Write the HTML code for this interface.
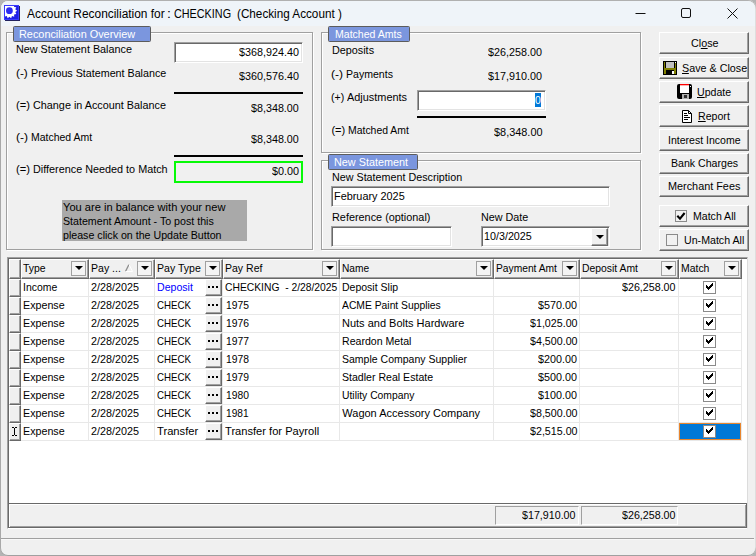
<!DOCTYPE html>
<html><head><meta charset="utf-8"><title>Account Reconciliation</title>
<style>
html,body{margin:0;padding:0;}
body{width:756px;height:556px;overflow:hidden;background:#b4b4b4;font-family:"Liberation Sans",sans-serif;font-size:11px;color:#000;position:relative;}
#win{position:absolute;left:0;top:0;width:756px;height:556px;border-radius:8px;background:#f0f0f0;overflow:hidden;box-shadow:inset 1px 0 0 #a8a8a8, inset 0 1px 0 #b0b0b0, inset 0 -1px 0 #a0a0a0, inset -1px 0 0 #dedede;}
#win div,#win svg,#win span{position:absolute;box-sizing:border-box;white-space:nowrap;}
#tb{left:1px;top:1px;width:754px;height:25px;background:#eff4f9;border-radius:7px 7px 0 0;}
.t{line-height:13px;height:13px;transform-origin:0 0;}
.tt{line-height:16px;height:16px;transform-origin:0 0;}
.grp{border:1px solid #a0a0a0;box-shadow:inset 1px 1px 0 #fff, 1px 1px 0 #fff;}
.lbl{background:#7b96de;border:1px solid #5c5c5c;height:16px;border-radius:1.5px;}
.inp{background:#fff;border:1px solid #a0a0a0;border-right-color:#fff;border-bottom-color:#fff;box-shadow:inset 1px 1px 0 #696969, inset -1px -1px 0 #e3e3e3;}
.hl{background:#000;height:2px;}
.btn{background:#f0f0f0;border:1px solid #fff;border-right-color:#696969;border-bottom-color:#696969;box-shadow:inset -1px -1px 0 #a0a0a0;height:22px;left:659px;width:90px;}
u{text-decoration:none;position:relative;}
u:after{content:"";position:absolute;left:0;right:0;bottom:0;height:1px;background:#000;}
.hc{top:259px;height:20px;background:#f0f0f0;border-top:1px solid #fff;border-left:1px solid #fff;border-right:1px solid #696969;border-bottom:1px solid #696969;box-shadow:inset -1px -1px 0 #a0a0a0;}
.fb{top:261px;width:15px;height:15px;border:1px solid #a0a0a0;background:#f4f4f4;}
.ar{width:0;height:0;border:4px solid transparent;border-top:4px solid #000;border-bottom:none;}
.vl{top:279px;width:1px;height:162px;background:#e8e8e8;}
.hln{left:21px;width:721px;height:1px;background:#e8e8e8;}
.ind{left:9px;width:12px;height:18px;background:#f0f0f0;border-left:1px solid #fff;border-top:1px solid #fff;border-right:1px solid #696969;border-bottom:1px solid #696969;box-shadow:inset -1px -1px 0 #a0a0a0;}
.eb{left:205px;width:17px;height:17px;background:#f0f0f0;border:1px solid #fff;border-right-color:#696969;border-bottom-color:#696969;box-shadow:inset -1px -1px 0 #a0a0a0;}
.eb i{position:absolute;top:6px;width:2px;height:2px;background:#000;}
.cb2{width:12px;height:12px;background:#f1f1f1;border:1px solid #8a8a8a;}
.cb{width:13px;height:13px;background:#fff;border:1px solid #8a8a8a;}
</style></head><body>
<div id="win">
<div id="tb"></div>
<svg style="left:4px;top:5px" width="16" height="16" viewBox="0 0 16 16"><rect x="1" y="1" width="15" height="15" fill="#22225e"/><rect x="0" y="0" width="15" height="15" fill="#1f1fe6"/><rect x=".5" y=".5" width="14" height="14" fill="none" stroke="#3a3aff" stroke-width="1"/><svg x="1" y="1" width="13" height="13" viewBox="1 1 13 13"><path d="M13.10 5.70L11.25 7.04L12.34 9.04L10.09 9.44L10.20 11.72L8.00 11.11L7.11 13.21L5.40 11.70L3.69 13.21L2.80 11.11L0.60 11.72L0.71 9.44L-1.54 9.04L-0.45 7.04L-2.30 5.70L-0.45 4.36L-1.54 2.36L0.71 1.96L0.60 -0.32L2.80 0.29L3.69 -1.81L5.40 -0.30L7.11 -1.81L8.00 0.29L10.20 -0.32L10.09 1.96L12.34 2.36L11.25 4.36z" fill="#fff"/></svg><circle cx="5.4" cy="5.7" r="3.4" fill="#2b2bf2"/></svg>
<div class="tt" style="left:26.70px;top:6px;transform:scaleX(0.9925);font-size:12px;">Account Reconciliation for</div>
<div class="tt" style="left:167.38px;top:6px;transform:scaleX(1.1667);font-size:12px;">:</div>
<div class="tt" style="left:173.76px;top:6px;transform:scaleX(0.9005);font-size:12px;">CHECKING</div>
<div class="tt" style="left:237.42px;top:6px;transform:scaleX(0.9761);font-size:12px;">(Checking Account )</div>
<svg style="left:630px;top:0" width="126" height="26" viewBox="0 0 126 26"><g stroke="#111" stroke-width="1" fill="none"><path d="M5.5 13.5h10"/><rect x="51.5" y="8.5" width="9" height="9" rx="1.5"/><path d="M97.5 8.5l10 10M107.5 8.5l-10 10"/></g></svg>
<div class="grp" style="left:6px;top:32px;width:307px;height:218px;"></div>
<div class="lbl" style="left:13px;top:26px;width:138px;"></div>
<div class="t" style="left:19.31px;top:27.5px;transform:scaleX(0.9885);color:#fff;">Reconciliation Overview</div>
<div class="t" style="left:16.22px;top:43px;transform:scaleX(0.9825);">New Statement Balance</div>
<div class="t" style="left:16.20px;top:67px;transform:scaleX(1.0748);">(-)</div>
<div class="t" style="left:31.02px;top:67px;transform:scaleX(0.9743);">Previous Statement Balance</div>
<div class="t" style="left:16.24px;top:99px;transform:scaleX(1.0131);">(=)</div>
<div class="t" style="left:32.76px;top:99px;transform:scaleX(0.9834);">Change in Account Balance</div>
<div class="t" style="left:16.19px;top:131px;transform:scaleX(1.0955);">(-)</div>
<div class="t" style="left:31.44px;top:131px;transform:scaleX(0.9507);">Matched Amt</div>
<div class="t" style="left:16.24px;top:163px;transform:scaleX(1.0131);">(=)</div>
<div class="t" style="left:33.01px;top:163px;transform:scaleX(0.9845);">Difference Needed to Match</div>
<div class="inp" style="left:174px;top:42px;width:129px;height:21px;"></div>
<div class="t" style="left:239.10px;top:46px;transform:scaleX(0.9793);">$368,924.40</div>
<div class="t" style="left:239.10px;top:70px;transform:scaleX(0.9793);">$360,576.40</div>
<div class="hl" style="left:174px;top:92px;width:129px;"></div>
<div class="t" style="left:251.10px;top:102px;transform:scaleX(0.9769);">$8,348.00</div>
<div class="t" style="left:251.10px;top:133px;transform:scaleX(0.9769);">$8,348.00</div>
<div class="hl" style="left:174px;top:155px;width:129px;"></div>
<div style="left:174px;top:161px;width:129px;height:22px;border:2px solid #06fa06;"></div>
<div class="t" style="left:271.70px;top:165px;transform:scaleX(0.9849);">$0.00</div>
<div style="left:62px;top:200px;width:185px;height:41px;background:#a9a9a9;"></div>
<div class="t" style="left:62.80px;top:201px;transform:scaleX(1.0088);">You are in balance with your new</div>
<div class="t" style="left:62.56px;top:215px;transform:scaleX(0.9684);">Statement Amount - To post this</div>
<div class="t" style="left:62.92px;top:229px;transform:scaleX(0.9673);">please click on the Update Button</div>
<div class="grp" style="left:321px;top:32px;width:320px;height:121px;"></div>
<div class="lbl" style="left:328px;top:26px;width:82px;"></div>
<div class="t" style="left:334.74px;top:27.5px;transform:scaleX(0.9572);color:#fff;">Matched Amts</div>
<div class="t" style="left:332.02px;top:44px;transform:scaleX(0.9820);">Deposits</div>
<div class="t" style="left:331.39px;top:68px;transform:scaleX(1.0955);">(-)</div>
<div class="t" style="left:346.24px;top:68px;transform:scaleX(0.9589);">Payments</div>
<div class="t" style="left:331.48px;top:91px;transform:scaleX(0.9568);">(+)</div>
<div class="t" style="left:347.00px;top:91px;transform:scaleX(0.9921);">Adjustments</div>
<div class="t" style="left:331.45px;top:124px;">(=)</div>
<div class="t" style="left:348.45px;top:124px;transform:scaleX(0.9476);">Matched Amt</div>
<div class="t" style="left:488.20px;top:46px;transform:scaleX(0.9792);">$26,258.00</div>
<div class="t" style="left:488.20px;top:70px;transform:scaleX(0.9792);">$17,910.00</div>
<div class="inp" style="left:417px;top:90px;width:129px;height:21px;"></div>
<div style="left:535px;top:93px;width:6px;height:14px;background:#0078d7;"></div>
<div class="t" style="left:535.02px;top:93.5px;transform:scaleX(0.9434);color:#fff;">0</div>
<div class="hl" style="left:417px;top:116px;width:129px;"></div>
<div class="t" style="left:493.60px;top:126px;transform:scaleX(0.9914);">$8,348.00</div>
<div class="grp" style="left:321px;top:160px;width:320px;height:90px;"></div>
<div class="lbl" style="left:328px;top:154px;width:90px;"></div>
<div class="t" style="left:334.21px;top:155.5px;transform:scaleX(0.9846);color:#fff;">New Statement</div>
<div class="t" style="left:331.72px;top:171px;transform:scaleX(0.9764);">New Statement Description</div>
<div class="inp" style="left:331px;top:186px;width:279px;height:21px;"></div>
<div class="t" style="left:334.21px;top:190px;transform:scaleX(0.9882);">February 2025</div>
<div class="t" style="left:331.71px;top:211px;transform:scaleX(0.9877);">Reference (optional)</div>
<div class="t" style="left:481.42px;top:211px;transform:scaleX(0.9802);">New Date</div>
<div class="inp" style="left:331px;top:226px;width:121px;height:21px;"></div>
<div class="inp" style="left:481px;top:226px;width:129px;height:21px;"></div>
<div class="t" style="left:483.92px;top:229.5px;transform:scaleX(0.9766);">10/3/2025</div>
<div class="eb" style="left:591px;top:228px;width:17px;height:18px;"></div>
<div class="ar" style="left:596px;top:235px;"></div>
<div class="btn" style="top:32px;height:22px;"></div>
<div class="t" style="left:690.76px;top:37px;transform:scaleX(0.9777);">Cl<u>o</u>se</div>
<div class="btn" style="top:57px;height:22px;"></div>
<div class="t" style="left:682.06px;top:62px;transform:scaleX(0.9768);"><u>S</u>ave &amp; Close</div>
<div class="btn" style="top:81px;height:22px;"></div>
<div class="t" style="left:697.13px;top:86px;transform:scaleX(0.9619);"><u>U</u>pdate</div>
<div class="btn" style="top:105px;height:22px;"></div>
<div class="t" style="left:698.03px;top:110px;transform:scaleX(0.9638);"><u>R</u>eport</div>
<div class="btn" style="top:129px;height:22px;"></div>
<div class="t" style="left:668.14px;top:134px;transform:scaleX(0.9577);">Interest Income</div>
<div class="btn" style="top:153px;height:21px;"></div>
<div class="t" style="left:670.73px;top:157px;transform:scaleX(0.9627);">Bank Charges</div>
<div class="btn" style="top:176px;height:21px;"></div>
<div class="t" style="left:668.01px;top:180px;transform:scaleX(0.9859);">Merchant Fees</div>
<div class="btn" style="top:205px;height:22px;"><div class="cb2" style="left:15px;top:4px;"><svg style="left:0;top:0" width="10" height="10" viewBox="0 0 10 10"><path d="M1.3 4.7L4 7.6L8.6 2" stroke="#000" stroke-width="2.1" fill="none"/></svg></div></div>
<div class="t" style="left:693.04px;top:210px;transform:scaleX(0.9601);">Match All</div>
<div class="btn" style="top:229px;height:22px;"><div class="cb2" style="left:6px;top:4px;"></div></div>
<div class="t" style="left:684.03px;top:234px;transform:scaleX(0.9664);">Un-Match All</div>
<svg style="left:663px;top:61px" width="14" height="14" viewBox="0 0 14 14"><rect x="0" y="0" width="14" height="14" fill="#000"/><rect x="1" y="1" width="12" height="12" fill="#808000"/><rect x="3" y="1" width="8" height="6" fill="#c0c0c0"/><rect x="2" y="1" width="1" height="6" fill="#000"/><rect x="11" y="1" width="1" height="6" fill="#000"/><rect x="3" y="7" width="8" height="1" fill="#000" opacity="0"/><rect x="3" y="9" width="8" height="4" fill="#000"/><rect x="9" y="10" width="2" height="3" fill="#fff"/><rect x="12" y="1" width="1" height="1" fill="#fff"/></svg>
<svg style="left:677px;top:84px" width="15" height="15" viewBox="0 0 15 15"><rect x="0" y="0" width="15" height="15" rx="2" fill="#000"/><rect x="3" y="1" width="9" height="8" fill="#fff"/><rect x="3" y="0" width="9" height="1.3" fill="#ff0000"/><rect x="5" y="10" width="7" height="5" fill="#b0b0b0"/><rect x="7" y="11" width="3" height="3" fill="#303030"/><rect x="13" y="2" width="1" height="1" fill="#fff"/></svg>
<svg style="left:682px;top:110px" width="10" height="13" viewBox="0 0 10 13"><path d="M.5 .5h6l3 3v9h-9z" fill="#fff" stroke="#000"/><path d="M6.5 .5v3h3" fill="none" stroke="#000"/><path d="M2 3.5h3M2 5.5h4M2 7.5h6M2 9.5h4" stroke="#000" fill="none"/></svg>
<div style="left:7px;top:257px;width:741px;height:272px;background:#fff;border:1px solid #a0a0a0;border-right-color:#dcdcdc;border-bottom-color:#fff;box-shadow:inset 1px 1px 0 #696969;"></div>
<div class="hc" style="left:9px;width:12px;"></div>
<div class="hc" style="left:21px;width:68px;"></div>
<div class="fb" style="left:71px;"></div><div class="ar" style="left:75px;top:266px;"></div>
<div class="hc" style="left:89px;width:66px;"></div>
<div class="fb" style="left:137px;"></div><div class="ar" style="left:141px;top:266px;"></div>
<div class="hc" style="left:155px;width:68px;"></div>
<div class="fb" style="left:205px;"></div><div class="ar" style="left:209px;top:266px;"></div>
<div class="hc" style="left:223px;width:117px;"></div>
<div class="fb" style="left:322px;"></div><div class="ar" style="left:326px;top:266px;"></div>
<div class="hc" style="left:340px;width:154px;"></div>
<div class="fb" style="left:476px;"></div><div class="ar" style="left:480px;top:266px;"></div>
<div class="hc" style="left:494px;width:86px;"></div>
<div class="fb" style="left:562px;"></div><div class="ar" style="left:566px;top:266px;"></div>
<div class="hc" style="left:580px;width:99px;"></div>
<div class="fb" style="left:661px;"></div><div class="ar" style="left:665px;top:266px;"></div>
<div class="hc" style="left:679px;width:63px;"></div>
<div class="fb" style="left:724px;"></div><div class="ar" style="left:728px;top:266px;"></div>
<div class="t" style="left:23.11px;top:262px;transform:scaleX(0.9491);">Type</div>
<div class="t" style="left:91.04px;top:262px;transform:scaleX(0.9583);">Pay ...</div>
<div class="t" style="left:157.24px;top:262px;transform:scaleX(0.9598);">Pay Type</div>
<div class="t" style="left:225.04px;top:262px;transform:scaleX(0.9563);">Pay Ref</div>
<div class="t" style="left:342.07px;top:262px;transform:scaleX(0.9258);">Name</div>
<div class="t" style="left:496.06px;top:262px;transform:scaleX(0.9314);">Payment Amt</div>
<div class="t" style="left:582.25px;top:262px;transform:scaleX(0.9431);">Deposit Amt</div>
<div class="t" style="left:681.45px;top:262px;transform:scaleX(0.9476);">Match</div>
<svg style="left:125px;top:264px" width="9" height="8" viewBox="0 0 9 8"><path d="M4 .5L.5 7.5" stroke="#8c8c8c" stroke-width="1.3" fill="none"/><path d="M4 .5L7.5 7.5H.5" stroke="#fff" fill="none"/></svg>
<div class="vl" style="left:88px;"></div>
<div class="vl" style="left:154px;"></div>
<div class="vl" style="left:222px;"></div>
<div class="vl" style="left:339px;"></div>
<div class="vl" style="left:493px;"></div>
<div class="vl" style="left:579px;"></div>
<div class="vl" style="left:678px;"></div>
<div class="vl" style="left:741px;"></div>
<div class="ind" style="top:279px;"></div>
<div class="hln" style="top:296px;"></div>
<div class="t" style="left:22.95px;top:281px;transform:scaleX(0.9479);">Income</div>
<div class="t" style="left:90.76px;top:281px;transform:scaleX(0.9798);">2/28/2025</div>
<div class="t" style="left:157.24px;top:281px;transform:scaleX(0.9604);color:#0000ff;">Deposit</div>
<div class="eb" style="top:279px;"><i style="left:2px"></i><i style="left:6px"></i><i style="left:10px"></i></div>
<div class="t" style="left:224.78px;top:281px;transform:scaleX(0.9372);">CHECKING &nbsp;- 2/28/2025</div>
<div class="t" style="left:342.04px;top:281px;transform:scaleX(0.9551);">Deposit Slip</div>
<div class="t" style="left:622.20px;top:281px;transform:scaleX(0.9718);">$26,258.00</div>
<div class="cb" style="left:703px;top:281px;"><svg style="left:2px;top:1px" width="7" height="7" viewBox="0 0 7 7" shape-rendering="crispEdges"><path d="M0 2h1v3h-1zM1 3h1v3h-1zM2 4h1v3h-1zM3 3h1v3h-1zM4 2h1v3h-1zM5 1h1v3h-1zM6 0h1v3h-1z" fill="#000"/></svg></div>
<div class="ind" style="top:297px;"></div>
<div class="hln" style="top:314px;"></div>
<div class="t" style="left:23.02px;top:299px;transform:scaleX(0.9725);">Expense</div>
<div class="t" style="left:90.76px;top:299px;transform:scaleX(0.9798);">2/28/2025</div>
<div class="t" style="left:157.02px;top:299px;transform:scaleX(0.8794);">CHECK</div>
<div class="eb" style="top:297px;"><i style="left:2px"></i><i style="left:6px"></i><i style="left:10px"></i></div>
<div class="t" style="left:225.75px;top:299px;transform:scaleX(0.9375);">1975</div>
<div class="t" style="left:342.30px;top:299px;transform:scaleX(0.9388);">ACME Paint Supplies</div>
<div class="t" style="left:538.20px;top:299px;transform:scaleX(0.9785);">$570.00</div>
<div class="cb" style="left:703px;top:299px;"><svg style="left:2px;top:1px" width="7" height="7" viewBox="0 0 7 7" shape-rendering="crispEdges"><path d="M0 2h1v3h-1zM1 3h1v3h-1zM2 4h1v3h-1zM3 3h1v3h-1zM4 2h1v3h-1zM5 1h1v3h-1zM6 0h1v3h-1z" fill="#000"/></svg></div>
<div class="ind" style="top:315px;"></div>
<div class="hln" style="top:332px;"></div>
<div class="t" style="left:23.02px;top:317px;transform:scaleX(0.9725);">Expense</div>
<div class="t" style="left:90.76px;top:317px;transform:scaleX(0.9798);">2/28/2025</div>
<div class="t" style="left:157.02px;top:317px;transform:scaleX(0.8794);">CHECK</div>
<div class="eb" style="top:315px;"><i style="left:2px"></i><i style="left:6px"></i><i style="left:10px"></i></div>
<div class="t" style="left:225.75px;top:317px;transform:scaleX(0.9395);">1976</div>
<div class="t" style="left:342.00px;top:317px;">Nuts and Bolts Hardware</div>
<div class="t" style="left:529.60px;top:317px;transform:scaleX(0.9707);">$1,025.00</div>
<div class="cb" style="left:703px;top:317px;"><svg style="left:2px;top:1px" width="7" height="7" viewBox="0 0 7 7" shape-rendering="crispEdges"><path d="M0 2h1v3h-1zM1 3h1v3h-1zM2 4h1v3h-1zM3 3h1v3h-1zM4 2h1v3h-1zM5 1h1v3h-1zM6 0h1v3h-1z" fill="#000"/></svg></div>
<div class="ind" style="top:333px;"></div>
<div class="hln" style="top:350px;"></div>
<div class="t" style="left:23.02px;top:335px;transform:scaleX(0.9725);">Expense</div>
<div class="t" style="left:90.76px;top:335px;transform:scaleX(0.9798);">2/28/2025</div>
<div class="t" style="left:157.02px;top:335px;transform:scaleX(0.8794);">CHECK</div>
<div class="eb" style="top:333px;"><i style="left:2px"></i><i style="left:6px"></i><i style="left:10px"></i></div>
<div class="t" style="left:225.75px;top:335px;transform:scaleX(0.9416);">1977</div>
<div class="t" style="left:342.03px;top:335px;transform:scaleX(0.9624);">Reardon Metal</div>
<div class="t" style="left:529.60px;top:335px;transform:scaleX(0.9707);">$4,500.00</div>
<div class="cb" style="left:703px;top:335px;"><svg style="left:2px;top:1px" width="7" height="7" viewBox="0 0 7 7" shape-rendering="crispEdges"><path d="M0 2h1v3h-1zM1 3h1v3h-1zM2 4h1v3h-1zM3 3h1v3h-1zM4 2h1v3h-1zM5 1h1v3h-1zM6 0h1v3h-1z" fill="#000"/></svg></div>
<div class="ind" style="top:351px;"></div>
<div class="hln" style="top:368px;"></div>
<div class="t" style="left:23.02px;top:353px;transform:scaleX(0.9725);">Expense</div>
<div class="t" style="left:90.76px;top:353px;transform:scaleX(0.9798);">2/28/2025</div>
<div class="t" style="left:157.02px;top:353px;transform:scaleX(0.8794);">CHECK</div>
<div class="eb" style="top:351px;"><i style="left:2px"></i><i style="left:6px"></i><i style="left:10px"></i></div>
<div class="t" style="left:225.75px;top:353px;transform:scaleX(0.9395);">1978</div>
<div class="t" style="left:341.87px;top:353px;transform:scaleX(0.9552);">Sample Company Supplier</div>
<div class="t" style="left:538.20px;top:353px;transform:scaleX(0.9785);">$200.00</div>
<div class="cb" style="left:703px;top:353px;"><svg style="left:2px;top:1px" width="7" height="7" viewBox="0 0 7 7" shape-rendering="crispEdges"><path d="M0 2h1v3h-1zM1 3h1v3h-1zM2 4h1v3h-1zM3 3h1v3h-1zM4 2h1v3h-1zM5 1h1v3h-1zM6 0h1v3h-1z" fill="#000"/></svg></div>
<div class="ind" style="top:369px;"></div>
<div class="hln" style="top:386px;"></div>
<div class="t" style="left:23.02px;top:371px;transform:scaleX(0.9725);">Expense</div>
<div class="t" style="left:90.76px;top:371px;transform:scaleX(0.9798);">2/28/2025</div>
<div class="t" style="left:157.02px;top:371px;transform:scaleX(0.8794);">CHECK</div>
<div class="eb" style="top:369px;"><i style="left:2px"></i><i style="left:6px"></i><i style="left:10px"></i></div>
<div class="t" style="left:225.75px;top:371px;transform:scaleX(0.9416);">1979</div>
<div class="t" style="left:341.87px;top:371px;transform:scaleX(0.9611);">Stadler Real Estate</div>
<div class="t" style="left:538.20px;top:371px;transform:scaleX(0.9785);">$500.00</div>
<div class="cb" style="left:703px;top:371px;"><svg style="left:2px;top:1px" width="7" height="7" viewBox="0 0 7 7" shape-rendering="crispEdges"><path d="M0 2h1v3h-1zM1 3h1v3h-1zM2 4h1v3h-1zM3 3h1v3h-1zM4 2h1v3h-1zM5 1h1v3h-1zM6 0h1v3h-1z" fill="#000"/></svg></div>
<div class="ind" style="top:387px;"></div>
<div class="hln" style="top:404px;"></div>
<div class="t" style="left:23.02px;top:389px;transform:scaleX(0.9725);">Expense</div>
<div class="t" style="left:90.76px;top:389px;transform:scaleX(0.9798);">2/28/2025</div>
<div class="t" style="left:157.02px;top:389px;transform:scaleX(0.8794);">CHECK</div>
<div class="eb" style="top:387px;"><i style="left:2px"></i><i style="left:6px"></i><i style="left:10px"></i></div>
<div class="t" style="left:225.75px;top:389px;transform:scaleX(0.9375);">1980</div>
<div class="t" style="left:342.15px;top:389px;transform:scaleX(0.9394);">Utility Company</div>
<div class="t" style="left:538.20px;top:389px;transform:scaleX(0.9785);">$100.00</div>
<div class="cb" style="left:703px;top:389px;"><svg style="left:2px;top:1px" width="7" height="7" viewBox="0 0 7 7" shape-rendering="crispEdges"><path d="M0 2h1v3h-1zM1 3h1v3h-1zM2 4h1v3h-1zM3 3h1v3h-1zM4 2h1v3h-1zM5 1h1v3h-1zM6 0h1v3h-1z" fill="#000"/></svg></div>
<div class="ind" style="top:405px;"></div>
<div class="hln" style="top:422px;"></div>
<div class="t" style="left:23.02px;top:407px;transform:scaleX(0.9725);">Expense</div>
<div class="t" style="left:90.76px;top:407px;transform:scaleX(0.9798);">2/28/2025</div>
<div class="t" style="left:157.02px;top:407px;transform:scaleX(0.8794);">CHECK</div>
<div class="eb" style="top:405px;"><i style="left:2px"></i><i style="left:6px"></i><i style="left:10px"></i></div>
<div class="t" style="left:225.76px;top:407px;transform:scaleX(0.9200);">1981</div>
<div class="t" style="left:342.30px;top:407px;">Wagon Accessory Company</div>
<div class="t" style="left:529.60px;top:407px;transform:scaleX(0.9707);">$8,500.00</div>
<div class="cb" style="left:703px;top:407px;"><svg style="left:2px;top:1px" width="7" height="7" viewBox="0 0 7 7" shape-rendering="crispEdges"><path d="M0 2h1v3h-1zM1 3h1v3h-1zM2 4h1v3h-1zM3 3h1v3h-1zM4 2h1v3h-1zM5 1h1v3h-1zM6 0h1v3h-1z" fill="#000"/></svg></div>
<div class="ind" style="top:423px;"></div>
<div class="hln" style="top:440px;"></div>
<div class="t" style="left:23.02px;top:425px;transform:scaleX(0.9725);">Expense</div>
<div class="t" style="left:90.76px;top:425px;transform:scaleX(0.9798);">2/28/2025</div>
<div class="t" style="left:157.30px;top:425px;transform:scaleX(1.0153);">Transfer</div>
<div class="eb" style="top:423px;"><i style="left:2px"></i><i style="left:6px"></i><i style="left:10px"></i></div>
<div class="t" style="left:225.10px;top:425px;transform:scaleX(1.0106);">Transfer for Payroll</div>
<div class="t" style="left:529.60px;top:425px;transform:scaleX(0.9707);">$2,515.00</div>
<div style="left:679px;top:423px;width:62px;height:17px;background:#0078d7;border:1px solid #e8862e;"></div>
<div class="cb" style="left:703px;top:425px;"><svg style="left:2px;top:1px" width="7" height="7" viewBox="0 0 7 7" shape-rendering="crispEdges"><path d="M0 2h1v3h-1zM1 3h1v3h-1zM2 4h1v3h-1zM3 3h1v3h-1zM4 2h1v3h-1zM5 1h1v3h-1zM6 0h1v3h-1z" fill="#000"/></svg></div>
<svg style="left:12px;top:427px" width="5" height="9" viewBox="0 0 5 9" shape-rendering="crispEdges"><path d="M0 .5h2M3 .5h2M2.5 1v7M0 8.5h2M3 8.5h2" stroke="#000" stroke-width="1" fill="none"/></svg>
<div style="left:8px;top:503px;width:739px;height:25px;background:#f0f0f0;border:1px solid #696969;box-shadow:inset 1px 1px 0 #fff, inset -1px -1px 0 #a0a0a0;"></div>
<div style="left:495px;top:506px;width:84px;height:19px;border:1px solid #a0a0a0;border-right-color:#fff;border-bottom-color:#fff;"></div>
<div style="left:581px;top:506px;width:97px;height:19px;border:1px solid #a0a0a0;border-right-color:#fff;border-bottom-color:#fff;"></div>
<div class="t" style="left:522.20px;top:509px;transform:scaleX(0.9718);">$17,910.00</div>
<div class="t" style="left:621.60px;top:509px;transform:scaleX(0.9718);">$26,258.00</div>
<div style="left:1px;top:538px;width:753px;height:2px;background:#a0a0a0;border-bottom:1px solid #f8f8f8;"></div>
</div>
</body></html>
